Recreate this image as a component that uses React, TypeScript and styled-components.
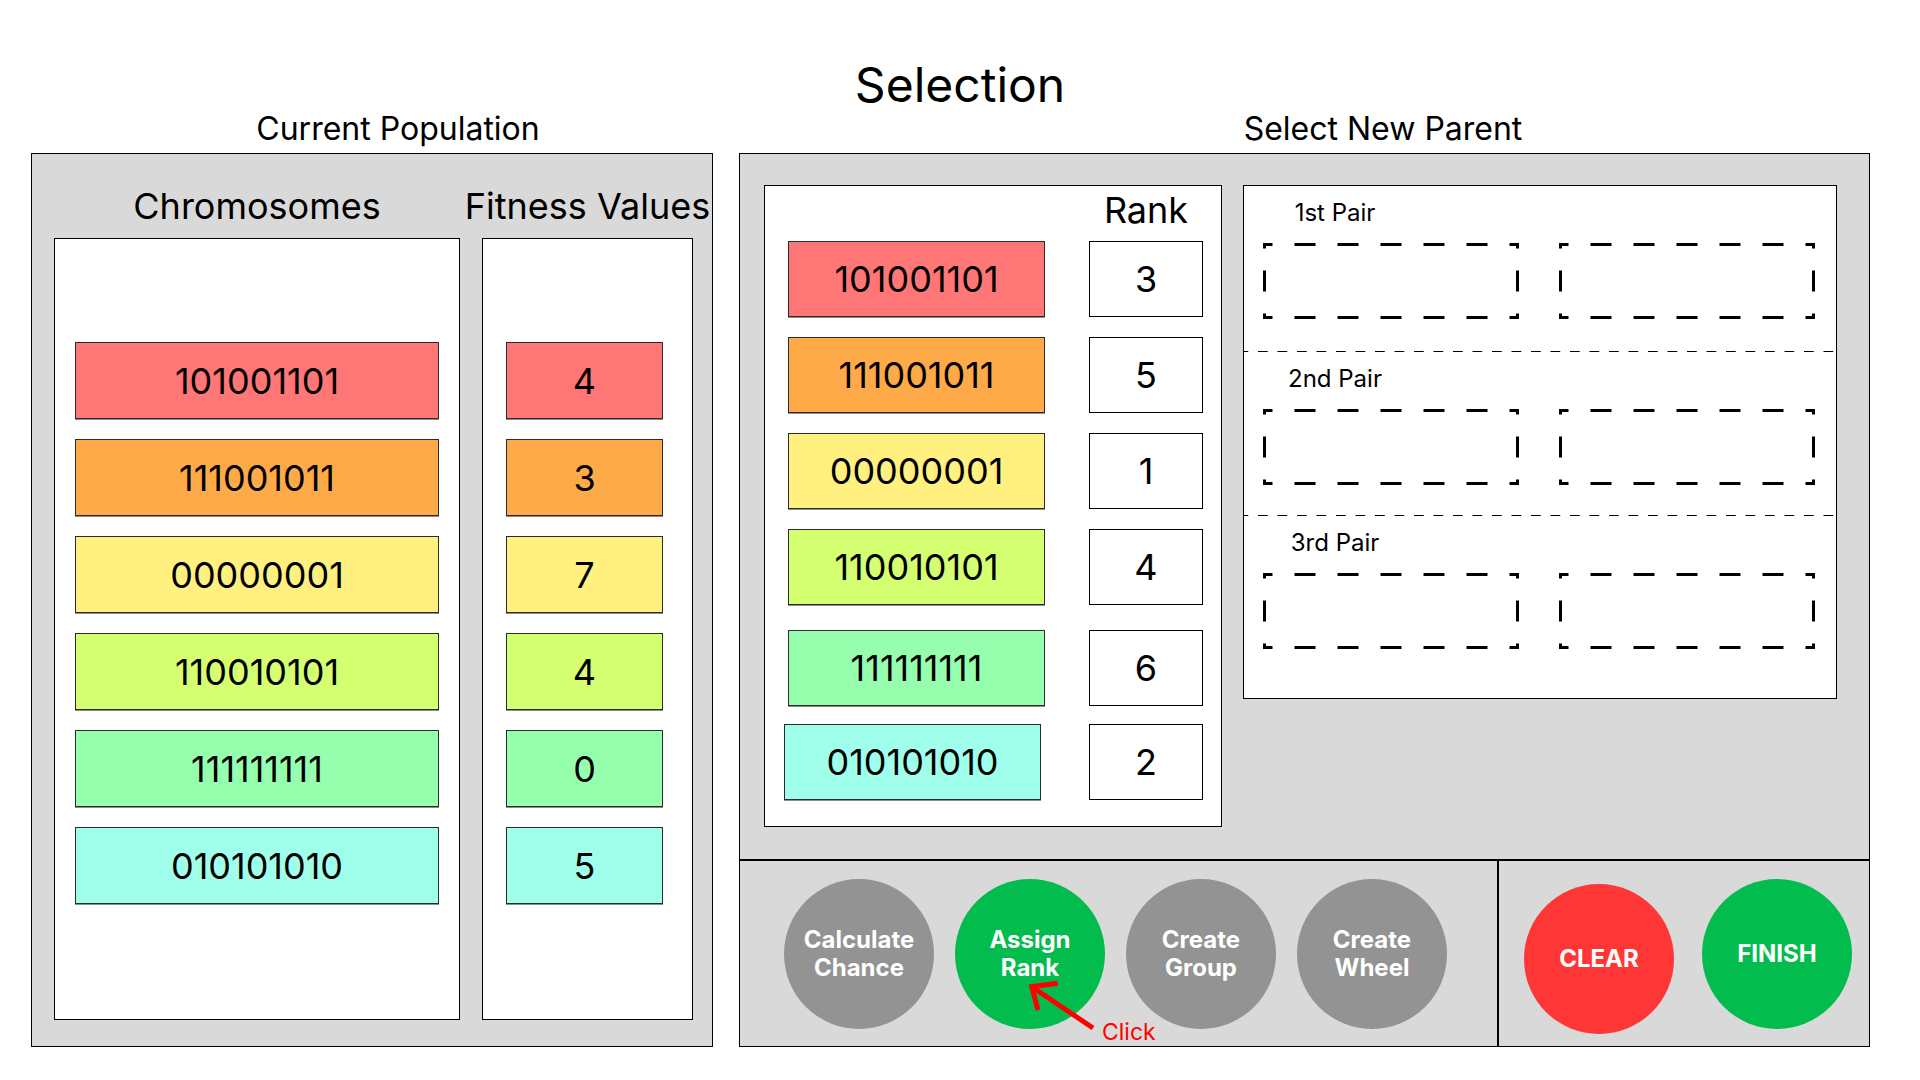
import React from 'react';
import styled, { createGlobalStyle } from 'styled-components';

const GlobalStyle = createGlobalStyle`
  html, body {
    margin: 0;
    padding: 0;
    background: #fff;
  }
  body {
    font-family: Inter, "Noto Sans", Arial, sans-serif;
    color: #000;
  }
  * {
    box-sizing: border-box;
  }
`;

type Chromosome = {
  bits: string;
  fitness: number;
  rank: number;
  color: string;
  nudge?: number;
  lift?: number;
};

const population: Chromosome[] = [
  { bits: '101001101', fitness: 4, rank: 3, color: '#ff7676' },
  { bits: '111001011', fitness: 3, rank: 5, color: '#ffaa48' },
  { bits: '00000001', fitness: 7, rank: 1, color: '#fff080' },
  { bits: '110010101', fitness: 4, rank: 4, color: '#d4ff70' },
  { bits: '111111111', fitness: 0, rank: 6, color: '#96ffae', lift: 5 },
  { bits: '010101010', fitness: 5, rank: 2, color: '#a0ffea', nudge: -4, lift: -2 },
];

const pairs = [
  { label: '1st Pair', height: '165px' },
  { label: '2nd Pair', height: '163px' },
  { label: '3rd Pair', height: 'auto' },
];

const Page = styled.div`
  width: 1920px;
  height: 1080px;
  overflow: hidden;
`;

const Title = styled.h1`
  margin: 0;
  padding-top: 61px;
  font-size: 48px;
  line-height: 48px;
  font-weight: 400;
  text-align: center;
`;

const Columns = styled.div`
  display: grid;
  grid-template-columns: 682px 1131px;
  column-gap: 26px;
  padding-left: 31px;
  margin-top: 2px;
`;

const Column = styled.section`
  display: flex;
  flex-direction: column;
`;

const Heading = styled.h2<{ $shift: number }>`
  margin: 0 0 6px;
  padding-left: ${(p) => p.$shift}px;
  font-size: 32px;
  line-height: 36px;
  font-weight: 400;
  text-align: center;
  white-space: nowrap;
`;

/* left panel */

const PopulationPanel = styled.div`
  height: 894px;
  border: 1px solid #000;
  background: #d9d9d9;
  display: grid;
  grid-template-columns: 406px 211px;
  column-gap: 22px;
  padding: 31px 0 26px 22px;
`;

const PopColumn = styled.div`
  display: flex;
  flex-direction: column;
  min-height: 0;
`;

const ColHeading = styled.div`
  display: flex;
  justify-content: center;
  white-space: nowrap;
  font-size: 36px;
  line-height: 42px;
  margin-bottom: 11px;
`;

const WhiteBox = styled.div<{ $inset: number }>`
  flex: 1;
  background: #fff;
  border: 1px solid #000;
  padding: 103px 20px 0 ${(p) => p.$inset}px;
  display: flex;
  flex-direction: column;
  gap: 20px;
`;

const Chip = styled.div<{ $color: string; $width?: number; $h: number; $nudge?: number }>`
  width: ${(p) => (p.$width ? `${p.$width}px` : 'auto')};
  height: ${(p) => p.$h}px;
  margin-left: ${(p) => p.$nudge || 0}px;
  display: flex;
  align-items: center;
  justify-content: center;
  background: ${(p) => p.$color};
  border: 1px solid #2b2b2b;
  box-shadow: 0 1px 0 rgba(0, 0, 0, 0.45);
  font-size: 36px;
  line-height: 1;
`;

/* right panel */

const ParentPanel = styled.div`
  height: 894px;
  border: 1px solid #000;
  background: #d9d9d9;
  display: flex;
  flex-direction: column;
`;

const ParentTop = styled.div`
  flex: 1;
  display: flex;
  align-items: flex-start;
  gap: 21px;
  padding: 31px 0 0 24px;
`;

const RankBox = styled.div`
  width: 458px;
  height: 642px;
  background: #fff;
  border: 1px solid #000;
  padding: 4px 0 0 23px;
`;

const RankRow = styled.div<{ $h: number; $lift?: number }>`
  display: grid;
  grid-template-columns: 257px 114px;
  column-gap: 44px;
  height: ${(p) => p.$h}px;
  margin-top: ${(p) => p.$lift || 0}px;
`;

const RankTitle = styled.div`
  grid-column: 2;
  text-align: center;
  font-size: 36px;
  line-height: 40px;
`;

const RankList = styled.div`
  margin-top: 11px;
  display: flex;
  flex-direction: column;
  gap: 20px;
`;

const RankCell = styled.div`
  background: #fff;
  border: 1px solid #000;
  display: flex;
  align-items: center;
  justify-content: center;
  font-size: 36px;
  line-height: 1;
`;

const PairsBox = styled.div`
  width: 594px;
  height: 514px;
  background: #fff;
  border: 1px solid #000;
  display: flex;
  flex-direction: column;
`;

const PairSection = styled.div<{ $h: string }>`
  height: ${(p) => p.$h};
  flex: ${(p) => (p.$h === 'auto' ? 1 : 'none')};
  padding: 12px 0 0 19px;
`;

const PairLabel = styled.div`
  width: 120px;
  margin: 0 0 15px 12px;
  text-align: center;
  font-size: 24px;
  line-height: 30px;
`;

const SlotRow = styled.div`
  display: flex;
  gap: 40px;
`;

const Slot = styled.div`
  width: 256px;
  height: 76px;
  background-image:
    linear-gradient(90deg, transparent 0 11px, #000 11px 32px, transparent 32px),
    linear-gradient(90deg, transparent 0 11px, #000 11px 32px, transparent 32px),
    linear-gradient(180deg, transparent 0 11px, #000 11px 32px, transparent 32px),
    linear-gradient(180deg, transparent 0 11px, #000 11px 32px, transparent 32px);
  background-size: 43px 3px, 43px 3px, 3px 43px, 3px 43px;
  background-position: center top, center bottom, left center, right center;
  background-repeat: repeat-x, repeat-x, repeat-y, repeat-y;
`;

const Divider = styled.div`
  height: 1px;
  flex-shrink: 0;
  background-image: linear-gradient(90deg, #000 0 10px, transparent 10px);
  background-size: 19.5px 1px;
  background-position: 14px 0;
  background-repeat: repeat-x;
`;

/* action bar */

const ActionBar = styled.div`
  height: 187px;
  border-top: 2px solid #000;
  display: grid;
  grid-template-columns: 757px 1fr;
`;

const StepGroup = styled.div`
  position: relative;
  display: flex;
  align-items: center;
  gap: 21px;
  padding-left: 44px;
`;

const FinalGroup = styled.div`
  border-left: 2px solid #000;
  display: flex;
  align-items: center;
  gap: 28px;
  padding-left: 25px;
`;

const Circle = styled.button<{ $tone: string; $drop?: number }>`
  width: 150px;
  height: 150px;
  flex-shrink: 0;
  margin-top: ${(p) => p.$drop || 0}px;
  padding: 0;
  border: none;
  border-radius: 50%;
  background: ${(p) => p.$tone};
  color: #fff;
  font-family: Inter, "Noto Sans", Arial, sans-serif;
  font-weight: 700;
  font-size: 24px;
  line-height: 28px;
  text-align: center;
  display: flex;
  align-items: center;
  justify-content: center;
  cursor: pointer;
`;

const Pointer = styled.svg`
  position: absolute;
  left: 285px;
  top: 114px;
  overflow: visible;
`;

const ClickNote = styled.span`
  position: absolute;
  left: 362px;
  top: 160px;
  color: #ff0000;
  font-size: 23px;
  line-height: 23px;
`;

const steps = [
  { lines: ['Calculate', 'Chance'], tone: '#939393' },
  { lines: ['Assign', 'Rank'], tone: '#02bd4d' },
  { lines: ['Create', 'Group'], tone: '#939393' },
  { lines: ['Create', 'Wheel'], tone: '#939393' },
];

const App = () => {
  return (
    <Page>
      <GlobalStyle />
      <Title>Selection</Title>
      <Columns>
        <Column>
          <Heading $shift={52}>Current Population</Heading>
          <PopulationPanel>
            <PopColumn>
              <ColHeading>Chromosomes</ColHeading>
              <WhiteBox $inset={20}>
                {population.map((c) => (
                  <Chip key={c.bits} $color={c.color} $h={77}>
                    {c.bits}
                  </Chip>
                ))}
              </WhiteBox>
            </PopColumn>
            <PopColumn>
              <ColHeading>Fitness Values</ColHeading>
              <WhiteBox $inset={23}>
                {population.map((c) => (
                  <Chip key={c.bits} $color={c.color} $width={157} $h={77}>
                    {c.fitness}
                  </Chip>
                ))}
              </WhiteBox>
            </PopColumn>
          </PopulationPanel>
        </Column>

        <Column>
          <Heading $shift={157}>Select New Parent</Heading>
          <ParentPanel>
            <ParentTop>
              <RankBox>
                <RankRow $h={40}>
                  <RankTitle>Rank</RankTitle>
                </RankRow>
                <RankList>
                  {population.map((c) => (
                    <RankRow key={c.bits} $h={76} $lift={c.lift}>
                      <Chip $color={c.color} $h={76} $width={257} $nudge={c.nudge}>
                        {c.bits}
                      </Chip>
                      <RankCell>{c.rank}</RankCell>
                    </RankRow>
                  ))}
                </RankList>
              </RankBox>

              <PairsBox>
                {pairs.map((p, i) => (
                  <React.Fragment key={p.label}>
                    {i > 0 && <Divider />}
                    <PairSection $h={p.height}>
                      <PairLabel>{p.label}</PairLabel>
                      <SlotRow>
                        <Slot />
                        <Slot />
                      </SlotRow>
                    </PairSection>
                  </React.Fragment>
                ))}
              </PairsBox>
            </ParentTop>

            <ActionBar>
              <StepGroup>
                {steps.map((s) => (
                  <Circle key={s.lines.join(' ')} $tone={s.tone}>
                    {s.lines[0]}
                    <br />
                    {s.lines[1]}
                  </Circle>
                ))}
                <Pointer width="80" height="60" viewBox="0 0 80 60">
                  <polyline
                    points="32.7,8.3 6.7,11.7 13,35"
                    fill="none"
                    stroke="#ff0000"
                    strokeWidth="5"
                  />
                  <line x1="6.7" y1="11.7" x2="68" y2="53" stroke="#ff0000" strokeWidth="5" />
                </Pointer>
                <ClickNote>Click</ClickNote>
              </StepGroup>
              <FinalGroup>
                <Circle $tone="#ff3636" $drop={10}>
                  CLEAR
                </Circle>
                <Circle $tone="#02bd4d">FINISH</Circle>
              </FinalGroup>
            </ActionBar>
          </ParentPanel>
        </Column>
      </Columns>
    </Page>
  );
};

export default App;
